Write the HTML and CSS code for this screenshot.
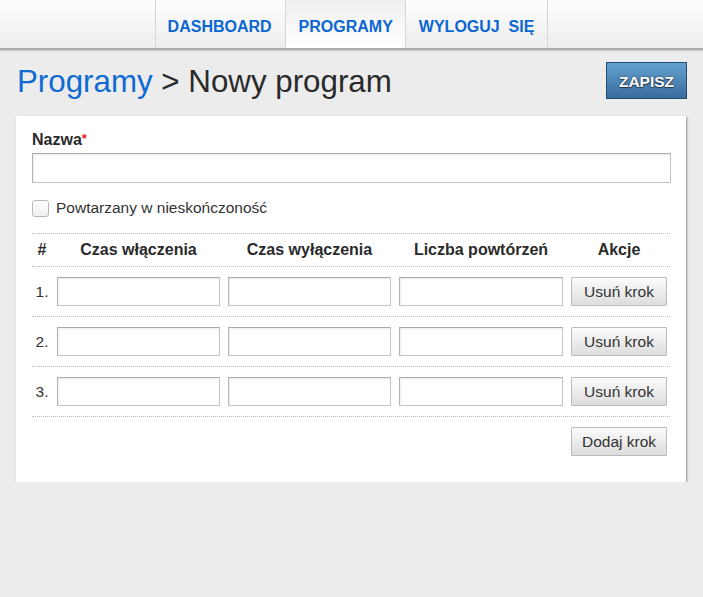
FILE: index.html
```html
<!DOCTYPE html>
<html lang="pl">
<head>
<meta charset="utf-8">
<title>Nowy program</title>
<link rel="stylesheet" href="styles.css">
</head>
<body>
<nav class="topnav">
  <a class="nav-item" href="#">DASHBOARD</a>
  <a class="nav-item active" href="#">PROGRAMY</a>
  <a class="nav-item" href="#">WYLOGUJ&nbsp; SIĘ</a>
</nav>
<main class="page">
  <header class="page-head">
    <h1 class="title"><a class="crumb" href="#">Programy</a> &gt; Nowy program</h1>
    <button class="btn-primary" type="button">ZAPISZ</button>
  </header>
  <section class="panel">
    <label class="field-label" for="name">Nazwa<span class="req">*</span></label>
    <input class="text-input wide" id="name" type="text">
    <label class="check-row"><input class="check" type="checkbox"> Powtarzany w nieskończoność</label>
    <div class="steps">
      <div class="row head">
        <div class="c-num">#</div>
        <div class="c-center">Czas włączenia</div>
        <div class="c-center">Czas wyłączenia</div>
        <div class="c-center">Liczba powtórzeń</div>
        <div class="c-center">Akcje</div>
      </div>
      <div class="row">
        <div class="c-num">1.</div>
        <input class="text-input" type="text">
        <input class="text-input" type="text">
        <input class="text-input" type="text">
        <button class="btn" type="button">Usuń krok</button>
      </div>
      <div class="row">
        <div class="c-num">2.</div>
        <input class="text-input" type="text">
        <input class="text-input" type="text">
        <input class="text-input" type="text">
        <button class="btn" type="button">Usuń krok</button>
      </div>
      <div class="row">
        <div class="c-num">3.</div>
        <input class="text-input" type="text">
        <input class="text-input" type="text">
        <input class="text-input" type="text">
        <button class="btn" type="button">Usuń krok</button>
      </div>
      <div class="add-row">
        <button class="btn" type="button">Dodaj krok</button>
      </div>
    </div>
  </section>
</main>
</body>
</html>
```

FILE: styles.css
```css
* { box-sizing: border-box; }
html, body {
  margin: 0;
  background: #ececec;
  font-family: "Liberation Sans", Arial, sans-serif;
  color: #333;
}
.topnav {
  display: flex;
  justify-content: center;
  height: 50px;
  background: linear-gradient(#fefefe, #ededed);
  border-bottom: 2px solid #ababab;
  box-shadow: 0 1px 1px rgba(0,0,0,0.12);
}
.nav-item {
  display: flex;
  align-items: center;
  height: 48px;
  padding: 6px 13px 0 13px;
  border-left: 1px solid #d6d6d6;
  font-size: 16px;
  font-weight: bold;
  color: #0b66d2;
  text-decoration: none;
}
.nav-item:first-child { padding-left: 12px; }
.nav-item:last-child { border-right: 1px solid #d6d6d6; padding-right: 13px; }
.nav-item.active { background: linear-gradient(#efefef, #ffffff); padding-left: 13px; padding-right: 12px; }
.page { padding: 12px 16px 0 16px; }
.page-head {
  display: flex;
  align-items: center;
  justify-content: space-between;
  height: 37px;
}
.title {
  margin: 2px 0 0 1px;
  font-size: 31.3px;
  font-weight: normal;
  color: #2a2a2a;
}
.crumb { color: #0e6bd3; text-decoration: none; }
.btn-primary {
  width: 81px;
  height: 37px;
  border: 1px solid #1e4d75;
  background: linear-gradient(#64a2cf, #3a6c9e);
  color: #fff;
  font-family: inherit;
  font-size: 15.5px;
  font-weight: bold;
  text-shadow: 0 0 2px rgba(0,0,0,0.6), 0 1px 1px rgba(0,0,0,0.5);
  padding: 2px 0 0 0;
}
.panel {
  margin-top: 17px;
  width: 670px;
  background: #fff;
  box-shadow: 1px 1px 2px rgba(0,0,0,0.4);
  padding: 15px 16px 26px 16px;
}
.field-label {
  display: block;
  font-size: 16px;
  font-weight: bold;
  color: #2b2b2b;
}
.req { color: #e02020; font-size: 13px; vertical-align: top; }
.text-input {
  display: block;
  height: 29px;
  margin: 0;
  border: 1px solid #c4c4c4;
  border-top-color: #a9a9a9;
  border-left-color: #b3b3b3;
  box-shadow: inset 1px 1px 2px rgba(0,0,0,0.08);
  background: #fff;
  font-family: inherit;
  font-size: 15px;
  width: 100%;
}
.wide { margin-top: 4px; width: 639px; height: 30px; }
.check-row {
  display: flex;
  align-items: center;
  gap: 7px;
  margin: 16px 0 16px 0;
  height: 18px;
  font-size: 15.5px;
  color: #333;
}
.check {
  appearance: none;
  -webkit-appearance: none;
  margin: 0;
  width: 17px;
  height: 17px;
  border: 1px solid #b9b9b9;
  border-radius: 3px;
  background: linear-gradient(#ffffff, #eeeeee);
}
.steps { width: 638px; border-top: 1px dotted #bcbcbc; }
.row {
  display: grid;
  grid-template-columns: 17px 163px 163px 164px 96px;
  column-gap: 8px;
  align-items: center;
  padding: 10px 0;
  border-bottom: 1px dotted #bcbcbc;
}
.row.head {
  padding: 7px 0;
  height: 33px;
  font-size: 16px;
  font-weight: bold;
  color: #2b2b2b;
}
.c-num { padding-left: 3px; text-align: center; font-size: 15.5px; }
.head .c-num { font-size: 16px; }
.c-center { text-align: center; white-space: nowrap; }
.btn {
  width: 96px;
  height: 29px;
  border: 1px solid #bcbcbc;
  border-radius: 1px;
  background: linear-gradient(#fbfbfb, #dddddd);
  font-family: inherit;
  font-size: 15.5px;
  color: #333;
  padding: 0;
}
.add-row {
  display: flex;
  justify-content: flex-start;
  padding: 10px 0 0 539px;
}
```
